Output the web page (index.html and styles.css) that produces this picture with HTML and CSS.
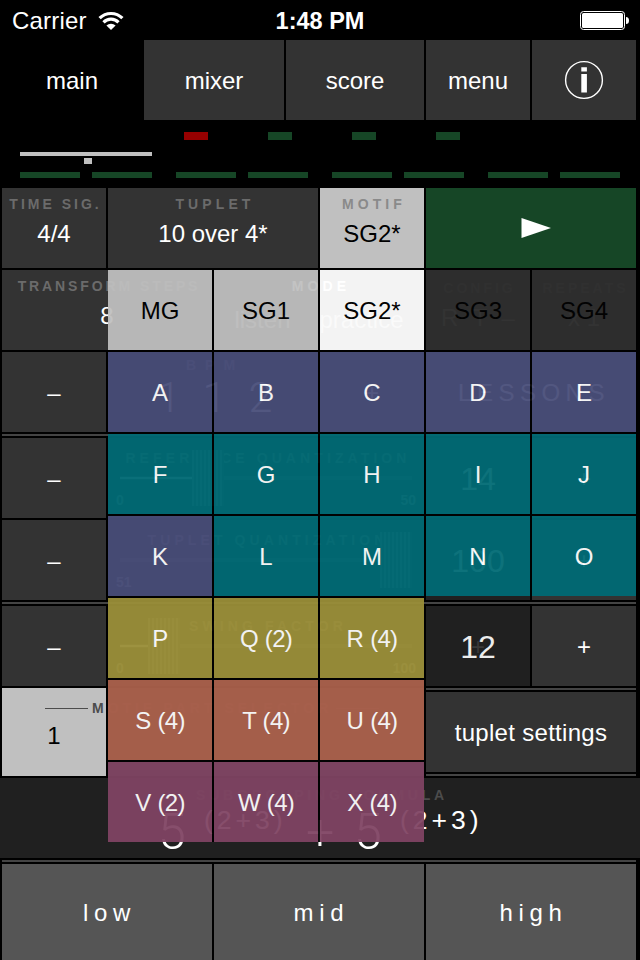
FILE: index.html
```html
<!DOCTYPE html>
<html lang="en">

<head>
    <meta charset="UTF-8">
    <meta name="viewport" content="width=device-width, initial-scale=1.0">
    <title>Rhythm Trainer</title>
    <link rel="stylesheet" href="styles.css">
</head>

<body>

<!-- Status bar -->
<div class="status-bar">
    <div class="carrier">
        <span>Carrier</span>
        <svg width="26" height="20" viewBox="0 0 26 20">
            <g fill="none" stroke="#fff" stroke-width="3.2">
                <path d="M1.6 7.2 A16.2 16.2 0 0 1 24.4 7.2"/>
                <path d="M5.5 11.3 A10.6 10.6 0 0 1 20.5 11.3"/>
            </g>
            <path d="M13 19 L8.4 14.6 A6.6 6.6 0 0 1 17.6 14.6 Z" fill="#fff"/>
        </svg>
    </div>
    <div class="clock">1:48 PM</div>
    <div class="battery">
        <svg width="50" height="20" viewBox="0 0 50 20">
            <rect x="0.5" y="0.5" width="44" height="18" rx="3" fill="none" stroke="#fff"/>
            <rect x="2" y="2" width="41" height="15" rx="1.5" fill="#fff"/>
            <path d="M46 6 q3 0 3 3.5 q0 3.5 -3 3.5 Z" fill="#fff"/>
        </svg>
    </div>
</div>

<!-- Tabs -->
<div class="tabs">
    <div class="tab active">main</div>
    <div class="tab">mixer</div>
    <div class="tab">score</div>
    <div class="tab">menu</div>
    <div class="tab">
        <svg width="40" height="40" viewBox="0 0 40 40">
            <circle cx="20" cy="20" r="18.4" fill="none" stroke="#fff" stroke-width="1.4"/>
            <path d="M17.3 7.2h5.6v4.2h-5.6zM17.3 14h5.6v18.6h-5.6z" fill="#fff"/>
        </svg>
    </div>
</div>

<!-- Beat display -->
<svg class="beats" width="640" height="68" viewBox="0 0 640 68">
    <rect x="184" y="12" width="24" height="8" fill="#960000"/>
    <g fill="#164626">
        <rect x="268" y="12" width="24" height="8"/>
        <rect x="352" y="12" width="24" height="8"/>
        <rect x="436" y="12" width="24" height="8"/>
        <rect x="20" y="52" width="60" height="6"/>
        <rect x="92" y="52" width="60" height="6"/>
        <rect x="176" y="52" width="60" height="6"/>
        <rect x="248" y="52" width="60" height="6"/>
        <rect x="332" y="52" width="60" height="6"/>
        <rect x="404" y="52" width="60" height="6"/>
        <rect x="488" y="52" width="60" height="6"/>
        <rect x="560" y="52" width="60" height="6"/>
    </g>
    <g fill="#c0c0c0">
        <rect x="20" y="32" width="132" height="4"/>
        <rect x="84" y="38" width="8" height="6"/>
    </g>
</svg>

<div class="panel">
    <div class="row">
        <div class="cell"><span class="label tight">TIME SIG.</span><span class="value">4/4</span></div>
        <div class="cell span2"><span class="label">TUPLET</span><span class="value">10 over 4*</span></div>
        <div class="cell selected"><span class="label">MOTIF</span><span class="value">SG2*</span></div>
        <div class="cell span2 play">
            <svg width="30" height="20" viewBox="0 0 30 20"><path d="M0.5 0 L30 10 L0.5 20 Z" fill="#fff"/></svg>
        </div>
    </div>

    <div class="row">
        <div class="cell span2"><span class="label steps">TRANSFORM STEPS</span><span class="value">8</span></div>
        <div class="cell span2 mode"><span class="label">MODE</span><span class="modes"><span>listen</span><span>practice</span></span></div>
        <div class="cell option"><span class="label tight">CONFIG</span><span class="value wide">R T –</span></div>
        <div class="cell option"><span class="label tight">REPEATS</span><span class="value">x 1</span></div>
    </div>

    <div class="row">
        <div class="cell center">–</div>
        <div class="cell span2 dark bpm"><span class="label">BPM</span><span class="bpm-value">112</span></div>
        <div class="cell center">+</div>
        <div class="cell span2 center lessons">LESSONS</div>
    </div>

    <div class="rule"></div>

    <div class="row">
        <div class="cell center">–</div>
        <div class="cell span3 dark slider">
            <span class="label">REFERENCE QUANTIZATION</span>
            <div class="track"><i class="fill" style="width: 72px"></i><i class="thumb"></i></div>
            <div class="limits"><span>0</span><span>50</span></div>
        </div>
        <div class="cell center dark number">14</div>
        <div class="cell center">+</div>
    </div>

    <div class="row">
        <div class="cell center">–</div>
        <div class="cell span3 dark slider">
            <span class="label">TUPLET QUANTIZATION</span>
            <div class="track"><i style="width: 264px"></i><i class="thumb"></i></div>
            <div class="limits"><span>51</span></div>
        </div>
        <div class="cell center dark number">100</div>
        <div class="cell center">+</div>
    </div>

    <div class="rule"></div>

    <div class="row">
        <div class="cell center">–</div>
        <div class="cell span3 dark slider">
            <span class="label">SWING FACTOR</span>
            <div class="track"><i class="fill" style="width: 28px"></i><i class="thumb"></i></div>
            <div class="limits"><span>0</span><span>100</span></div>
        </div>
        <div class="cell center dark number ghost"><span>12</span></div>
        <div class="cell center">+</div>
    </div>

    <div class="row parts">
        <div class="part-selector">
            <div class="part selected">1</div>
            <div class="part-rest"></div>
            <span class="part-title"><i></i>MOTIF PART SELECTOR<i></i></span>
        </div>
        <div class="settings">
            <div class="rule"></div>
            <div class="cell center tuplet-settings">tuplet settings</div>
            <div class="rule"></div>
        </div>
    </div>
</div>

<!-- Formula -->
<div class="formula">
    <span class="label">SUBGROUPING FORMULA</span>
    <div class="expression">
        <span class="base">5</span><span class="group">(2+3)</span><span class="plus">+</span><span class="base">5</span><span class="group">(2+3)</span>
    </div>
</div>

<div class="pads-rule"></div>
<div class="pads">
    <div class="pad">low</div>
    <div class="pad">mid</div>
    <div class="pad">high</div>
</div>

<!-- Motif menu, opens over the panel -->
<div class="motif-menu">
    <div class="menu-top">
        <div class="item gray">MG</div>
        <div class="item gray">SG1</div>
        <div class="item white">SG2*</div>
        <div class="item off">SG3</div>
        <div class="item off">SG4</div>
        <div class="item blue">A</div>
        <div class="item blue">B</div>
        <div class="item blue">C</div>
        <div class="item blue">D</div>
        <div class="item blue">E</div>
        <div class="item teal">F</div>
        <div class="item teal">G</div>
        <div class="item teal">H</div>
        <div class="item teal">I</div>
        <div class="item teal">J</div>
        <div class="item blue">K</div>
        <div class="item teal">L</div>
        <div class="item teal">M</div>
        <div class="item teal">N</div>
        <div class="item teal">O</div>
    </div>
    <div class="menu-bottom">
        <div class="item olive">P</div>
        <div class="item olive">Q (2)</div>
        <div class="item olive">R (4)</div>
        <div class="item rust">S (4)</div>
        <div class="item rust">T (4)</div>
        <div class="item rust">U (4)</div>
        <div class="item plum">V (2)</div>
        <div class="item plum">W (4)</div>
        <div class="item plum">X (4)</div>
    </div>
</div>

</body>
</html>
```
FILE: styles.css
```css
* {
    box-sizing: border-box;
}
body {
    position: relative;
    margin: 0;
    width: 640px;
    height: 960px;
    overflow: hidden;
    background: #000;
    color: #fff;
    font-family: "Liberation Sans", Arial, sans-serif;
    font-size: 24px;
    line-height: 28px;
}
svg {
    display: block;
}

/* Status bar */
.status-bar {
    display: grid;
    grid-template-columns: 1fr auto 1fr;
    height: 40px;
    padding: 1px 10px 0 12px;
    align-items: center;
}
.carrier {
    display: flex;
    gap: 11px;
    align-items: center;
    letter-spacing: 0.2px;
}
.clock {
    margin-right: 2px;
    font-weight: bold;
    font-size: 23.5px;
}
.battery {
    justify-self: end;
}

/* Tabs */
.tabs {
    display: grid;
    grid-template-columns: 142px 140px 138px 104px 104px;
    gap: 2px;
    height: 80px;
}
.tab {
    display: flex;
    align-items: center;
    justify-content: center;
    background: #333;
    padding-top: 2px;
}
.tab:last-child {
    padding-top: 0;
}
.tab.active {
    background: #000;
    padding-left: 2px;
}

/* Main panel */
.panel {
    display: flex;
    flex-direction: column;
    gap: 2px;
    padding: 0 4px 0 2px;
}
.row {
    display: grid;
    grid-template-columns: repeat(6, 104px);
    gap: 2px;
    height: 80px;
}
.cell {
    display: flex;
    flex-direction: column;
    align-items: center;
    height: 80px;
    background: #333;
    white-space: nowrap;
}
.span2 {
    grid-column: span 2;
}
.span3 {
    grid-column: span 3;
}
.center,
.play {
    justify-content: center;
}
.center {
    padding-top: 2px;
}
.dark {
    background: #202020;
}
.selected {
    background: #c0c0c0;
    color: #000;
}
.play {
    background: #164626;
    padding-left: 9px;
}
.label {
    margin-top: 8px;
    margin-right: -4px;
    font-size: 14px;
    line-height: 16px;
    font-weight: bold;
    letter-spacing: 4.1px;
    color: #6b6b6b;
}
.selected .label {
    color: #8a8a8a;
}
.label.tight {
    letter-spacing: 3px;
    margin-right: -3px;
}
.label.steps {
    letter-spacing: 2.9px;
}
.value {
    margin-top: 8px;
}
.mode .label {
    color: #fff;
}
.modes {
    display: flex;
    gap: 29px;
    margin-top: 12px;
    color: #aaa;
}
.option {
    color: #999;
}
.option .label {
    margin-top: 10px;
    color: #666;
}
.wide {
    word-spacing: 8px;
}
.bpm .label {
    margin-top: 5px;
    letter-spacing: 9px;
}
.bpm-value {
    margin: 10px -25px 0 0;
    font-family: Roboto, "Liberation Sans", sans-serif;
    font-size: 43px;
    font-weight: 300;
    letter-spacing: 22px;
}
.lessons {
    padding-left: 6px;
    letter-spacing: 5.5px;
}
.number {
    font-size: 32px;
    color: #ececec;
}
.ghost {
    position: relative;
}
.ghost span {
    position: relative;
}
.ghost::before {
    content: "+";
    position: absolute;
    font-size: 24px;
    color: #3a3a3a;
}
.rule {
    height: 2px;
    background: #444;
}

/* Sliders */
.slider {
    padding: 0 8px;
}
.slider .label {
    margin-top: 12px;
}
.track {
    display: flex;
    align-items: center;
    width: 292px;
    height: 4px;
    margin-top: 10px;
    background: #444;
}
.fill {
    height: 2px;
    background: #bbb;
}
.thumb {
    width: 32px;
    height: 56px;
    background: repeating-linear-gradient(90deg, #666 0 2px, #333 2px 4px);
}
.limits {
    display: flex;
    justify-content: space-between;
    width: 100%;
    margin-top: 10px;
    font-size: 14px;
    line-height: 20px;
    font-weight: bold;
    color: #888;
}

/* Motif parts */
.parts {
    grid-template-columns: 422px 210px;
    height: 88px;
}
.part-selector {
    position: relative;
    display: flex;
    gap: 2px;
}
.part {
    width: 104px;
    padding-top: 34px;
    text-align: center;
}
.part-rest {
    flex: 1;
    background: #333;
}
.part-title {
    position: absolute;
    left: 43px;
    top: 12px;
    display: flex;
    align-items: center;
    gap: 4px;
    font-size: 14px;
    line-height: 16px;
    font-weight: bold;
    letter-spacing: 4px;
    color: #4c4c4c;
    white-space: nowrap;
}
.part-title i {
    width: 43px;
    height: 1px;
    background: #4c4c4c;
}
.settings {
    display: flex;
    flex-direction: column;
    gap: 2px;
}
.tuplet-settings {
    letter-spacing: 0.3px;
}

/* Formula */
.formula {
    display: flex;
    flex-direction: column;
    align-items: center;
    height: 80px;
    margin-top: 2px;
    background: #202020;
}
.formula .label {
    margin-top: 9px;
    letter-spacing: 3.8px;
    color: #4c4c4c;
}
.expression {
    display: flex;
    align-items: baseline;
    width: 324px;
    height: 50px;
    padding-top: 15px;
    white-space: nowrap;
}
.base {
    width: 46px;
    flex-shrink: 0;
    font-family: Roboto, "Liberation Sans", sans-serif;
    font-size: 50px;
    font-weight: 300;
}
.group {
    width: 102px;
    flex-shrink: 0;
    position: relative;
    top: -20px;
    font-size: 26.5px;
    letter-spacing: 4px;
}
.plus {
    width: 48px;
    flex-shrink: 0;
    font-family: Roboto, "Liberation Sans", sans-serif;
    font-size: 50px;
    font-weight: 300;
}

/* Pads */
.pads-rule {
    height: 2px;
    margin: 2px 4px 2px 2px;
    background: #444;
}
.pads {
    display: grid;
    grid-template-columns: repeat(3, 210px);
    gap: 2px;
    height: 96px;
    padding-left: 2px;
}
.pad {
    display: flex;
    align-items: center;
    justify-content: center;
    padding: 2px 0 0 5px;
    background: #555;
    letter-spacing: 5.7px;
}

/* Motif menu */
.motif-menu {
    position: absolute;
    left: 108px;
    top: 270px;
    opacity: 0.94;
}
.menu-top,
.menu-bottom {
    display: grid;
    grid-auto-rows: 80px;
    gap: 2px;
    background: #000;
}
.menu-top {
    width: 528px;
    grid-template-columns: repeat(5, 104px);
}
.menu-bottom {
    width: 316px;
    padding-top: 2px;
    grid-template-columns: repeat(3, 104px);
    letter-spacing: -0.7px;
    word-spacing: 1px;
}
.item {
    display: flex;
    align-items: center;
    justify-content: center;
    padding-top: 2px;
}
.gray {
    background: #c0c0c0;
    color: #000;
}
.white {
    background: #fff;
    color: #000;
}
.off {
    background: #2d2d2d;
    color: #000;
}
.blue {
    background: #484d79;
}
.teal {
    background: #006b75;
}
.olive {
    background: #9c9039;
}
.rust {
    background: #ac614c;
}
.plum {
    background: #804463;
}
```
